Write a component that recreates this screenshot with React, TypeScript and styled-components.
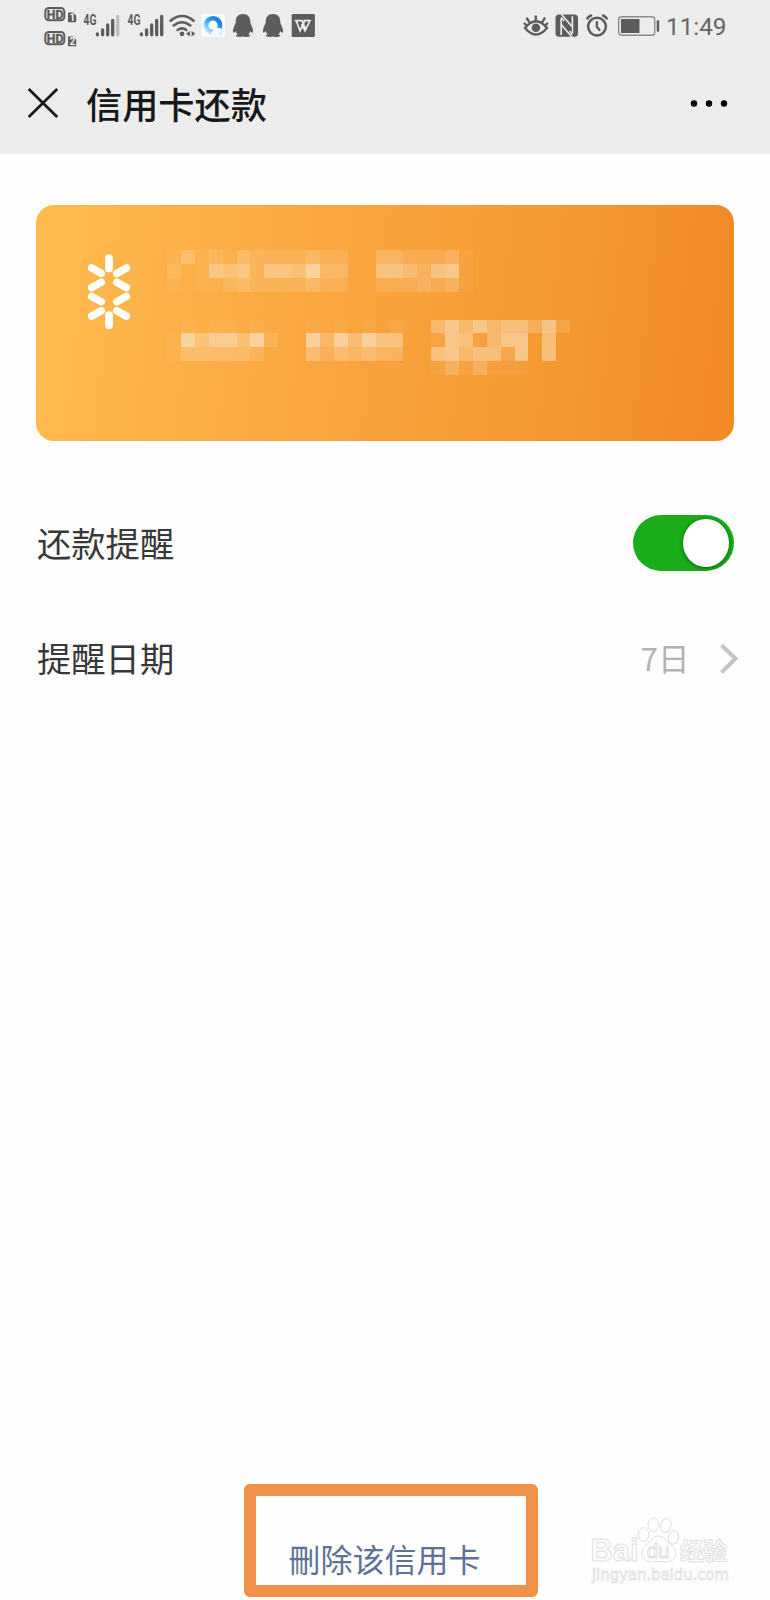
import React from 'react';
import styled, { createGlobalStyle } from 'styled-components';

const GlobalStyle = createGlobalStyle`
  * { box-sizing: border-box; }
  body {
    margin: 0;
    background: #fefefe;
    font-family: 'Noto Sans CJK SC', 'Noto Sans', sans-serif;
  }
`;

const Page = styled.main`
  width: 770px;
  height: 1600px;
  display: flex;
  flex-direction: column;
  background: #fefefe;
  overflow: hidden;
`;

const StatusBar = styled.div`
  height: 52px;
  display: flex;
  padding-left: 40px;
  background: #ececec;
`;

const Glyph = styled.svg`
  display: block;
  flex: none;
`;

const Spacer = styled.div`
  flex: 1;
`;

const Clock = styled.time`
  width: 106px;
  padding-left: 2px;
  font: 400 24.3px/53px Roboto, sans-serif;
  color: #666;
`;

const NavBar = styled.header`
  height: 102px;
  display: flex;
  align-items: center;
  padding: 0 40px 0 26px;
  background: #ececec;
`;

const Title = styled.h1`
  margin: 0 0 0 26px;
  flex: 1;
  font-size: 36.2px;
  line-height: 52px;
  font-weight: 500;
  color: #181818;
`;

const Card = styled.section`
  margin: 51px 36px 0;
  height: 235.5px;
  display: flex;
  align-items: flex-start;
  padding: 45px 0 0 49px;
  border-radius: 18px;
  background: linear-gradient(97deg, #feba4f 3%, #faa43e 45%, #f59830 74%, #f38a27 96%);
`;

const Mosaic = styled.svg`
  display: block;
  margin-left: 34px;
`;

const Settings = styled.section`
  display: flex;
  flex-direction: column;
  padding-top: 45px;
`;

const Row = styled.div<{ $end: number }>`
  height: 115px;
  display: flex;
  align-items: center;
  padding: 0 ${(p) => p.$end}px 0 37px;
`;

const Label = styled.span`
  flex: 1;
  padding-bottom: 3px;
  font-size: 34.3px;
  line-height: 50px;
  color: #383838;
`;

const Value = styled.span`
  margin-right: 28.5px;
  padding-bottom: 3px;
  font-size: 31.5px;
  line-height: 46px;
  color: #b2b2b2;
`;

const Switch = styled.button`
  width: 101px;
  height: 56px;
  display: flex;
  justify-content: flex-end;
  align-items: center;
  padding: 0 5.5px 0 0;
  border: 0;
  border-radius: 28px;
  background: #1aad19;
`;

const Knob = styled.span`
  width: 45.5px;
  height: 47.5px;
  border-radius: 50%;
  background: #fff;
  box-shadow: 0 1px 4px rgba(0, 0, 0, 0.5);
`;

const Footer = styled.footer`
  margin-top: auto;
  display: flex;
  align-items: flex-end;
  padding: 0 0 3px 244px;
`;

const DeleteBox = styled.div`
  width: 293.5px;
  height: 113.5px;
  display: flex;
  align-items: flex-end;
  border: 12.3px solid #f09149;
  border-radius: 6px;
  background: #fefefe;
`;

const DeleteLink = styled.a`
  padding: 0 0 2px 32.5px;
  font-size: 32px;
  line-height: 49px;
  color: #5f7198;
  white-space: nowrap;
`;

const Watermark = styled.svg`
  display: block;
  margin-left: 47px;
`;

const INK = '#5c5c5c';

const SimBadges = () => (
  <Glyph width="42" height="52" viewBox="40 0 42 52">
    {[
      { y: 0, n: '1' },
      { y: 24, n: '2' },
    ].map(({ y, n }) => (
      <g key={n} transform={`translate(0 ${y})`}>
        <rect x="45.3" y="7.9" width="19" height="12.4" rx="3.5" fill="#ececec" stroke={INK} strokeWidth="2" />
        <text x="46.8" y="18.8" fontFamily="Roboto" fontWeight="700" fontSize="13.5" textLength="16.6" lengthAdjust="spacingAndGlyphs" fill={INK} stroke={INK} strokeWidth=".4">HD</text>
        <path d="M68 12.4h5l3.2 3v6.9H68z" fill={INK} />
        <text x="69.4" y="21.3" fontFamily="Roboto" fontWeight="700" fontSize="10" fill="#ececec">{n}</text>
      </g>
    ))}
  </Glyph>
);

const Signal = ({ full }: { full?: boolean }) => (
  <Glyph width="43.7" height="52" viewBox="82 0 43.7 52">
    <text x="83.5" y="24.8" fontFamily="Roboto" fontWeight="700" fontSize="14.2" textLength="13" lengthAdjust="spacingAndGlyphs" fill={INK}>4G</text>
    <g stroke={INK} strokeWidth="3.3" strokeLinecap="round">
      <path d="M97.4 34v.8M102.6 29.8v5M107.7 25v9.8M112.7 20.5v14.3" />
      <path d="M117.7 16.5v18.3" stroke={full ? INK : '#bdbdbd'} />
    </g>
  </Glyph>
);

const Wifi = () => (
  <Glyph width="28.6" height="52" viewBox="169.4 0 28.6 52">
    <g fill="none" stroke={INK} strokeWidth="2.5" strokeLinecap="round">
      <path d="M171 20.8q11.500-9.500 23 0M174 25.500q8.500-6.400 16.800 0M178 30q4.600-3.200 8.800 0" />
    </g>
    <circle cx="182.400" cy="33.800" r="2.400" fill={INK} />
    <path d="M190.300 31v5.600l-3.800-2.800zM192 31v5.600l3.800-2.800z" fill={INK} />
  </Glyph>
);

const BrowserIcon = () => (
  <Glyph width="31" height="52" viewBox="198 0 31 52">
    <defs>
      <linearGradient id="ring" x1="1" y1="0" x2="0" y2="1">
        <stop offset=".2" stopColor="#1b83e6" />
        <stop offset=".55" stopColor="#35a9f0" />
        <stop offset="1" stopColor="#d5effb" />
      </linearGradient>
    </defs>
    <rect x="201.300" y="14" width="23.500" height="23" rx="2.500" fill="#f8fafc" />
    <circle cx="213" cy="25.200" r="7" fill="none" stroke="url(#ring)" strokeWidth="4.600" />
    <path d="M211.500 34.500q-1-3.200 2.200-4.200 1-3.600 4.400-2.500 3-.2 4.300 2.700v4z" fill="#f8fafc" />
    <path d="M216 34.300q4.800-1.200 6.300-5.800v5.800z" fill="#d9eaf8" />
  </Glyph>
);

const Penguin = () => (
  <Glyph width="30" height="52" viewBox="229 0 30 52">
    <path
      d="M243 14c-4.900 0-7.300 3.400-7.300 7.600 0 1.700-.5 2.600-1.400 4.400-1.200 2.700-1.700 5.400-1 6.600.5.800 1.500-.3 2.300-1.500.4 1.500 1.100 2.600 2.100 3.500-1.500.3-2.200.9-2 1.500.4.900 5.300 1 7.300.4 2 .6 6.900.5 7.300-.4.200-.6-.5-1.200-2-1.500 1-.9 1.700-2 2.100-3.500.8 1.200 1.800 2.300 2.300 1.500.7-1.200.2-3.900-1-6.600-.9-1.800-1.400-2.700-1.400-4.400 0-4.200-2.400-7.600-7.300-7.600z"
      fill={INK}
    />
  </Glyph>
);

const WpsIcon = () => (
  <Glyph width="28" height="52" viewBox="289 0 28 52">
    <rect x="291.700" y="14" width="23.200" height="23" rx="1.200" fill={INK} />
    <path d="M294.800 20.600h7.200l3.700 9.200M296.200 20.600l3.900 10.200 4.700-10.200M301.500 24l3.500 6.800 5-10.200h-6.500" fill="none" stroke="#ececec" strokeWidth="1.700" />
  </Glyph>
);

const EyeIcon = () => (
  <Glyph width="32" height="52" viewBox="520 0 32 52">
    <path d="M525 28q11-13.500 22 0-11 13-22 0zM535.800 20.500v-4M529.500 22.300l-2.500-3.800M542 22.300l2.600-3.800M526.300 25.500l-1.700-2M545.500 25.500l1.700-2" fill="none" stroke={INK} strokeWidth="2.300" strokeLinecap="round" />
    <circle cx="535.900" cy="27.800" r="4.300" fill={INK} />
  </Glyph>
);

const NfcIcon = () => (
  <Glyph width="31" height="52" viewBox="552 0 31 52">
    <rect x="555.500" y="14.500" width="22.500" height="22.300" rx="3.500" fill={INK} />
    <path d="M561.200 35V18.300M572.400 33V16.300" stroke="#ececec" strokeWidth="1.700" />
    <path d="M561.200 14l11.200 13M561.200 24.500l11.200 13" stroke="#ececec" strokeWidth="1.700" />
    <path d="M562 17l9.600 11v6.500l-9.600-11z" fill={INK} />
    <path d="M561.200 17.500l3 3.500M569.500 31l3 3.500" stroke="#ececec" strokeWidth="1.500" />
  </Glyph>
);

const AlarmIcon = () => (
  <Glyph width="31" height="52" viewBox="583 0 31 52">
    <g fill="none" stroke={INK} strokeWidth="2.500" strokeLinecap="round">
      <circle cx="597" cy="26.600" r="8.900" />
      <path d="M587.300 18.500q1.300-2 3.700-3M606.700 18.500q-1.300-2-3.700-3" />
      <path d="M596.800 22v4.800l2.700 3.200" strokeWidth="2.200" />
    </g>
  </Glyph>
);

const BatteryIcon = () => (
  <Glyph width="50" height="52" viewBox="614 0 50 52">
    <rect x="618.700" y="16.700" width="36" height="18.600" rx="3" fill="none" stroke="#8c8c8c" strokeWidth="1.400" />
    <rect x="621" y="19" width="18.500" height="14" fill={INK} />
    <rect x="656.700" y="20.300" width="2.500" height="11.500" rx="1" fill={INK} />
  </Glyph>
);

/* Cell brightness 0-9, one digit per masked block */
const MASK = [
  '13121322223220033222310000000',
  '20154525547330055435610000000',
  '10112322223220022232310000000',
  '00000000000000000000000000000',
  '00000000000000000000000000000',
  '01011010001010101004646455362',
  '17466472007374755001651466050',
  '13333320004243433005645526050',
  '00000000000000000001313111000',
];

const CELL = 13.9;

const MaskedDetails = () => (
  <Mosaic width="404" height="126" viewBox="0 0 404 126" shapeRendering="crispEdges">
    {MASK.flatMap((line, r) =>
      line.split('').map((v, c) =>
        v === '0' ? null : (
          <rect key={`${r}-${c}`} x={c * CELL} y={r * CELL} width={CELL} height={CELL} fill="#f8e2c2" opacity={(Number(v) - 0.4) * 0.108} />
        ),
      ),
    )}
  </Mosaic>
);

const BankLogo = () => (
  <Glyph width="48" height="86" viewBox="85 250 48 86">
    <g fill="none" stroke="#fffefa" strokeLinecap="round">
      <path d="M109 258.500v10M109 315.200v10" strokeWidth="7.800" />
      <path
        d="M91.600 267.900l9.700 5.500M91.600 287.600l9.700-5.300M91.600 296.500l9.700 5.200M91.600 316.100l9.700-5.400M126.400 267.900l-9.700 5.500M126.400 287.600l-9.700-5.300M126.400 296.500l-9.700 5.200M126.400 316.100l-9.700-5.400"
        strokeWidth="7.500"
      />
    </g>
  </Glyph>
);

const BaiduMark = () => (
  <Watermark width="150" height="80" viewBox="584 1515 150 80">
    <g fill="#fefefe" stroke="#dedede" strokeWidth="1">
      <text x="589.500" y="1558.500" fontFamily="Liberation Sans" fontWeight="700" fontSize="31" textLength="48" lengthAdjust="spacingAndGlyphs">Bai</text>
      <ellipse cx="642.500" cy="1532.500" rx="5.300" ry="6.800" />
      <ellipse cx="652.300" cy="1522.800" rx="5.300" ry="7" />
      <ellipse cx="664.800" cy="1523.500" rx="5.300" ry="7" transform="rotate(15 664.800 1523.500)" />
      <ellipse cx="672.500" cy="1535.500" rx="5" ry="6.800" transform="rotate(15 672.500 1535.500)" />
      <path d="M657.500 1534c-6 0-7.500 5.500-11.500 8.500-6 4.500-6.500 10-3.500 14 3.500 4.500 9 3 15 3s12 1.500 15.500-3c3-4 2.500-9.500-3.500-14-4-3-6-8.500-12-8.500z" />
      <text x="645.500" y="1555.500" fontFamily="Liberation Sans" fontSize="20" textLength="23" lengthAdjust="spacingAndGlyphs">du</text>
      <text x="679" y="1557.500" fontFamily="Noto Sans CJK SC" fontWeight="700" fontSize="24" textLength="47">经验</text>
    </g>
    <text x="591" y="1577.500" fontFamily="DejaVu Sans" fontSize="16" textLength="137" lengthAdjust="spacingAndGlyphs" fill="#fefefe" stroke="#e0e0e0" strokeWidth=".8">jingyan.baidu.com</text>
  </Watermark>
);

export default function App() {
  return (
    <>
      <GlobalStyle />
      <Page>
        <StatusBar>
          <SimBadges />
          <Signal />
          <Signal full />
          <Wifi />
          <BrowserIcon />
          <Penguin />
          <Penguin />
          <WpsIcon />
          <Spacer />
          <EyeIcon />
          <NfcIcon />
          <AlarmIcon />
          <BatteryIcon />
          <Clock>11:49</Clock>
        </StatusBar>
        <NavBar>
          <Glyph width="34" height="34" viewBox="0 0 34 34">
            <path d="M2.700 3l28.500 28M31.200 3L2.700 31" stroke="#181818" strokeWidth="2.700" />
          </Glyph>
          <Title>信用卡还款</Title>
          <Glyph width="42" height="10" viewBox="0 0 42 10">
            <circle cx="6" cy="5.500" r="3.200" />
            <circle cx="21" cy="5.500" r="3.200" />
            <circle cx="36" cy="5.500" r="3.200" />
          </Glyph>
        </NavBar>
        <Card>
          <BankLogo />
          <MaskedDetails />
        </Card>
        <Settings>
          <Row $end={36}>
            <Label>还款提醒</Label>
            <Switch role="switch" aria-checked="true">
              <Knob />
            </Switch>
          </Row>
          <Row $end={30}>
            <Label>提醒日期</Label>
            <Value>7日</Value>
            <Glyph width="22" height="34" viewBox="0 0 22 34">
              <path d="M3.500 4.300L17.500 17.500 3.500 31.500" fill="none" stroke="#c4c4c4" strokeWidth="4" />
            </Glyph>
          </Row>
        </Settings>
        <Footer>
          <DeleteBox>
            <DeleteLink>刪除该信用卡</DeleteLink>
          </DeleteBox>
          <BaiduMark />
        </Footer>
      </Page>
    </>
  );
}
